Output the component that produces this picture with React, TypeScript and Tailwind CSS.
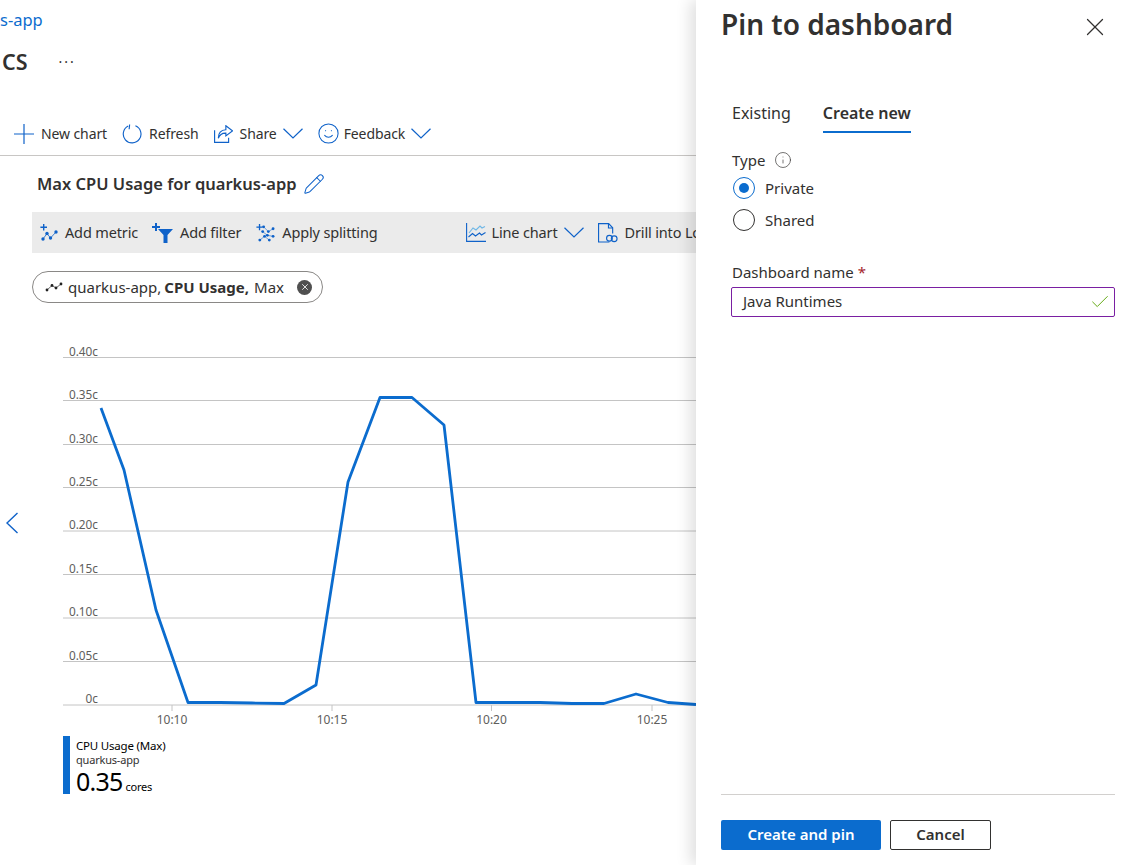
import { Check, Info, Pencil, Smile, X } from 'lucide-react';

const FONT = "font-['Noto_Sans',sans-serif]";

const gridLines = [
  { y: 357.5, label: '0.40c' },
  { y: 400.5, label: '0.35c' },
  { y: 444.5, label: '0.30c' },
  { y: 487.5, label: '0.25c' },
  { y: 531, label: '0.20c' },
  { y: 574.5, label: '0.15c' },
  { y: 618, label: '0.10c' },
  { y: 661.5, label: '0.05c' },
  { y: 705, label: '0c' },
];

const ticks = [
  { x: 172, label: '10:10' },
  { x: 332, label: '10:15' },
  { x: 491.5, label: '10:20' },
  { x: 652, label: '10:25' },
];

const points =
  '101,408 124,470 156,610 188,702.5 220,702.5 252,703 284,703.5 316,685 348,482 380,397.5 412,397.5 444,425 476,702.5 540,702.5 572,703.5 604,703.5 636,694 668,702.5 696,704.5';

function Chevron() {
  return (
    <svg width="20" height="11" viewBox="0 0 20 11" fill="none" stroke="#0f62c9" strokeWidth="1.2">
      <path d="M.5.8 10 10 19.5.8" />
    </svg>
  );
}

function ToolButton({ icon, label, chevron, roomy }: { icon: React.ReactNode; label: string; chevron?: boolean; roomy?: boolean }) {
  return (
    <div className="flex items-center whitespace-nowrap">
      {icon}
      <span className={roomy ? 'ml-[7px] text-[14.5px] tracking-[-0.15px] text-[#323130]' : 'ml-[7px] text-[14px] tracking-[-0.1px] text-[#323130]'}>
        {label}
      </span>
      {chevron && <span className="ml-[6px] flex"><Chevron /></span>}
    </div>
  );
}

function PlusIcon() {
  return (
    <svg width="20" height="20" viewBox="0 0 20 20" stroke="#0f62c9" strokeWidth="1.2">
      <path d="M10 0v20M0 10h20" />
    </svg>
  );
}

function RefreshIcon() {
  return (
    <svg width="20" height="20" viewBox="0 0 21 21" fill="none" stroke="#0f62c9" strokeWidth="1.2">
      <path d="M6.5 2.2a9.3 9.3 0 1 0 7.6-.3" />
      <path d="M8 .5 7.5 5.5" />
    </svg>
  );
}

function ShareIcon() {
  return (
    <svg width="19" height="18" viewBox="0 0 20 19" fill="none" stroke="#0f62c9" strokeWidth="1.2">
      <path d="M.6 5.5v12.9h14.8v-5" />
      <path d="M12.5.8 19.4 6.2l-6.9 5.3V8.6C8.5 8.4 6 10 4.5 14c0-5.5 3-8.8 8-9z" />
    </svg>
  );
}

function AddMetricIcon() {
  return (
    <svg width="18" height="18" viewBox="0 0 18 18" fill="#0f62c9" stroke="none">
      <path d="M3 0h1.4v2.6H7V4H4.4v2.6H3V4H.4V2.6H3z" />
      <circle cx="3" cy="15" r="1.7" />
      <circle cx="7" cy="9.5" r="1.7" />
      <circle cx="10.5" cy="14" r="1.7" />
      <circle cx="16" cy="8" r="1.7" />
      <path d="M3 15 7 9.5l3.5 4.5L16 8" fill="none" stroke="#0f62c9" strokeWidth=".8" />
    </svg>
  );
}

function AddFilterIcon() {
  return (
    <svg width="21" height="20" viewBox="0 0 21 20" fill="#0f62c9">
      <path d="M3 0h2v3h3v2H5v3H3V5H0V3h3z" />
      <path d="M6 6h15l-5.5 6v8h-4v-8z" />
    </svg>
  );
}

function SplitIcon() {
  return (
    <svg width="19" height="18" viewBox="0 0 20 19" fill="#0f62c9">
      <path d="M3 0h1.4v2.6H7V4H4.4v2.6H3V4H.4V2.6H3z" />
      {[[8, 3], [13, 8], [18, 5], [7, 8], [12, 12], [18, 13], [4, 17], [9, 13], [14, 17]].map(([cx, cy]) => (
        <circle key={`${cx}-${cy}`} cx={cx} cy={cy} r="1.5" />
      ))}
      <path d="M8 3l5 5 5-3M7 8l5 4 6 1M4 17l5-4 5 4" fill="none" stroke="#0f62c9" strokeWidth=".6" />
    </svg>
  );
}

function LineChartIcon() {
  return (
    <svg width="20" height="19" viewBox="0 0 20 19" fill="none" strokeWidth="1.1" className="-mr-[2px]">
      <path d="M.6 0v18.4H20" stroke="#0f62c9" />
      <path d="M3 10l4-5 3 2 4-4 2 2 3-1.5" stroke="#6fb7e6" />
      <path d="M2.5 14l4-3.5 3 2.5 4-3 2 2 4-2.5" stroke="#0f62c9" />
    </svg>
  );
}

function DrillIcon() {
  return (
    <svg width="20" height="20" viewBox="0 0 21 21" fill="none" stroke="#0f62c9" strokeWidth="1.2">
      <path d="M12 20H.6V.6h10.6L15.4 5v6" />
      <path d="M11 .6V5.3h4.4" />
      <circle cx="12" cy="16" r="3" />
      <circle cx="17" cy="16.5" r="3" />
    </svg>
  );
}

function Toolbar() {
  return (
    <div className="mt-[30px] flex h-[42px] items-center gap-[15px] border-b border-[#c8c6c4] pb-[2px] pl-[14px]">
      <ToolButton icon={<PlusIcon />} label="New chart" />
      <ToolButton icon={<RefreshIcon />} label="Refresh" />
      <ToolButton icon={<ShareIcon />} label="Share" chevron />
      <ToolButton icon={<Smile size={23} strokeWidth={1.1} color="#0f62c9" className="-ml-[1px] -mr-[3px]" />} label="Feedback" chevron />
    </div>
  );
}

function MetricBar() {
  return (
    <div className="ml-[32px] mt-[14px] flex h-[41px] items-center overflow-hidden whitespace-nowrap bg-[#ebebeb] pl-[8px]">
      <ToolButton roomy icon={<AddMetricIcon />} label="Add metric" />
      <div className="ml-[14px]">
        <ToolButton roomy icon={<AddFilterIcon />} label="Add filter" />
      </div>
      <div className="ml-[15px]">
        <ToolButton roomy icon={<SplitIcon />} label="Apply splitting" />
      </div>
      <div className="ml-[89px]">
        <ToolButton roomy icon={<LineChartIcon />} label="Line chart" chevron />
      </div>
      <div className="ml-[14px]">
        <ToolButton roomy icon={<DrillIcon />} label="Drill into Logs" />
      </div>
    </div>
  );
}

function MetricPill() {
  return (
    <div className="ml-[32px] mt-[18px] flex h-[32px] w-[291px] items-center rounded-full border border-[#8a8886] pl-[12px] text-[15px] text-[#323130]">
      <svg width="18" height="10" viewBox="0 0 18 10" fill="#222">
        <circle cx="2" cy="8" r="1.4" />
        <circle cx="7" cy="3.5" r="1.4" />
        <circle cx="11" cy="6" r="1.4" />
        <circle cx="16" cy="2" r="1.4" />
        <path d="M2 8l5-4.5L11 6l5-4" fill="none" stroke="#222" strokeWidth=".7" />
      </svg>
      <span className="ml-[5px]">quarkus-app,</span>
      <span className="ml-[3px] font-bold">CPU Usage,</span>
      <span className="ml-[5px]">Max</span>
      <span className="ml-auto mr-[10px] flex h-[15px] w-[15px] shrink-0 items-center justify-center rounded-full bg-[#505050]">
        <X size={10} strokeWidth={2} color="#fff" />
      </span>
    </div>
  );
}

function Chart() {
  return (
    <svg width="696" height="394" viewBox="0 340 696 394" className="mt-[37px] block">
      {gridLines.map((g) => (
        <g key={g.label}>
          <line x1="63" x2="696" y1={g.y} y2={g.y} stroke="#c4c4c4" strokeWidth="1" />
          <text x="98" y={g.y - 2} textAnchor="end" fontSize="11.8" fill="#605e5c" fontFamily="Noto Sans, sans-serif">
            {g.label}
          </text>
        </g>
      ))}
      {ticks.map((t) => (
        <g key={t.label}>
          <line x1={t.x} x2={t.x} y1="705" y2="711" stroke="#c4c4c4" />
          <text x={t.x} y="724" textAnchor="middle" fontSize="12" fill="#605e5c" fontFamily="Noto Sans, sans-serif">
            {t.label}
          </text>
        </g>
      ))}
      <polyline points={points} fill="none" stroke="#0b6cce" strokeWidth="2.8" strokeLinejoin="round" />
    </svg>
  );
}

function Legend() {
  return (
    <div className="ml-[63px] mt-[2px] flex h-[58px]">
      <div className="w-[7px] bg-[#0b6cce]" />
      <div className="ml-[6px] text-black">
        <div className="mt-[3px] text-[11.5px] leading-[14px] tracking-[-0.2px]">CPU Usage (Max)</div>
        <div className="text-[11px] leading-[14px] tracking-[-0.2px] text-[#323130]">quarkus-app</div>
        <div className="mt-[1px] flex items-baseline leading-[26px]">
          <span className="text-[25px] tracking-[-0.8px]">0.35</span>
          <span className="ml-[3px] text-[11px] tracking-[-0.2px]">cores</span>
        </div>
      </div>
    </div>
  );
}

function MainPane() {
  return (
    <div className="relative w-[696px] shrink-0 overflow-hidden">
      <div className="h-[40px] pt-[9px] text-[16.5px] leading-[22px] text-[#0b6cce]">s-app</div>
      <div className="flex h-[44px] items-start pl-[2px]">
        <span className="text-[21.5px] font-semibold leading-[44px] text-[#323130]">CS</span>
        <span className="ml-[31px] mt-[15px] text-[14px] leading-[14px] tracking-[2px] text-[#323130]">···</span>
      </div>
      <Toolbar />
      <div className="ml-[37px] mt-[14px] flex h-[28px] items-center">
        <span className="text-[16.5px] font-semibold text-[#323130]">Max CPU Usage for quarkus-app</span>
        <Pencil size={22} strokeWidth={1.1} color="#0f62c9" className="ml-[6px]" />
      </div>
      <MetricBar />
      <MetricPill />
      <Chart />
      <Legend />
      {/* pager arrow sits over the chart */}
      <svg width="14" height="22" viewBox="0 0 14 22" fill="none" stroke="#0f62c9" strokeWidth="1.4" className="absolute left-[5px] top-[512px]">
        <path d="M12.5 1 2 11l10.5 10" />
      </svg>
    </div>
  );
}

function Radio({ label, checked }: { label: string; checked?: boolean }) {
  return (
    <div className="flex h-[32px] items-center pl-[1px]">
      <span className={`flex h-[22px] w-[22px] items-center justify-center rounded-full border ${checked ? 'border-[#0b6cce]' : 'border-[#323130]'}`}>
        {checked && <span className="h-[10px] w-[10px] rounded-full bg-[#0b6cce]" />}
      </span>
      <span className="ml-[10px] text-[15px] text-[#323130]">{label}</span>
    </div>
  );
}

function PinPanel() {
  return (
    <div className="z-10 flex flex-1 flex-col bg-white pb-[15px] pl-[25px] pr-[17px] shadow-[-6px_0_14px_rgba(0,0,0,0.12)]">
      <div className="flex h-[48px] items-center justify-between">
        <h1 className="text-[28px] font-semibold text-[#323130]">Pin to dashboard</h1>
        <X size={30} strokeWidth={1} color="#323130" className="mr-[5px] mt-[5px]" />
      </div>
      <div className="ml-[11px] mt-[50px] flex h-[35px] items-start gap-[32px] text-[16px] text-[#323130]">
        <span className="leading-[30px]">Existing</span>
        <span className="h-[35px] border-b-2 border-[#0b6cce] font-semibold leading-[30px]">Create new</span>
      </div>
      <div className="ml-[11px] mt-[16px]">
        <div className="flex h-[22px] items-center text-[15px] text-[#323130]">
          Type
          <Info size={18} strokeWidth={0.9} color="#323130" className="ml-[9px]" />
        </div>
        <div className="mt-[1px]"><Radio label="Private" checked /></div>
        <Radio label="Shared" />
        <div className="mt-[25px] h-[22px] text-[15px] leading-[22px] text-[#323130]">
          Dashboard name <span className="text-[#a4262c]">*</span>
        </div>
        <div className="-ml-[1px] mt-[4px] flex h-[30px] items-center justify-between rounded-[2px] border border-[#7a1fa2] pb-[1px] pl-[11px] pr-[3px] text-[15px] text-[#323130]">
          Java Runtimes
          <Check size={22} strokeWidth={1} color="#57a300" />
        </div>
      </div>
      <div className="mt-auto border-t border-[#d2d0ce] pt-[25px]">
        <div className="flex gap-[9px]">
          <button className="h-[30px] w-[160px] rounded-[2px] bg-[#0b6cce] pb-[2px] text-[15px] font-semibold text-white">Create and pin</button>
          <button className="h-[30px] w-[101px] rounded-[2px] border border-[#323130] pb-[2px] text-[15px] font-semibold text-[#323130]">Cancel</button>
        </div>
      </div>
    </div>
  );
}

export default function App() {
  return (
    <div className={`flex h-[865px] w-[1132px] overflow-hidden bg-white ${FONT}`}>
      <MainPane />
      <PinPanel />
    </div>
  );
}
